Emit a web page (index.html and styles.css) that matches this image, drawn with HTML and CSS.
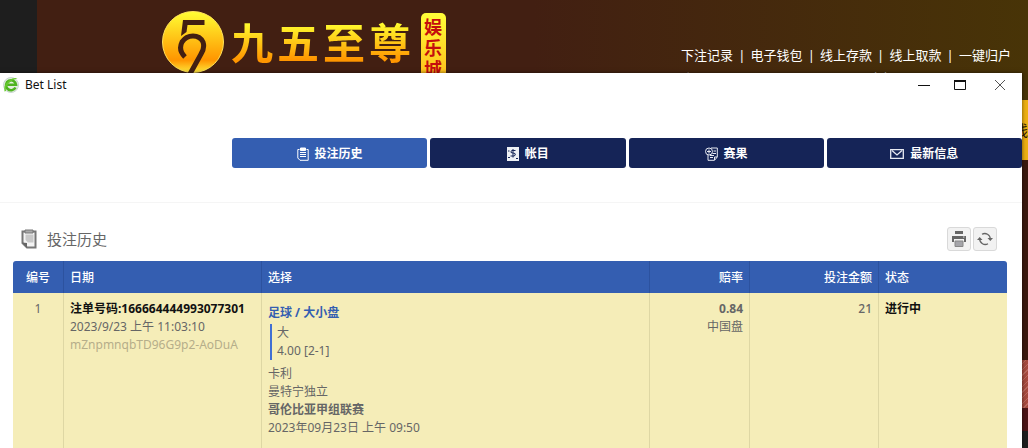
FILE: index.html
```html
<!DOCTYPE html>
<html lang="zh-CN">
<head>
  <meta charset="utf-8">
  <title>Bet List</title>
  <link rel="stylesheet" href="styles.css">
</head>
<body>
<div class="desktop">

<!-- Site behind the window -->
<div class="site">
  <header class="site-header">
    <a href="#" class="logo">
      <svg class="logo-mark" width="64" height="64" viewBox="0 0 64 64" aria-hidden="true">
        <defs>
          <linearGradient id="gold" x1="0" y1="0" x2="0" y2="1">
            <stop offset="0" stop-color="#ffff34"/>
            <stop offset="0.35" stop-color="#ffcf1c"/>
            <stop offset="0.8" stop-color="#ff9500"/>
            <stop offset="1" stop-color="#ffe93c"/>
          </linearGradient>
        </defs>
        <circle cx="32" cy="32" r="30.5" fill="url(#gold)" stroke="#ffe25a"/>
        <path d="M22 10H43.500V15H26.500L25.500 22L20 26Z" fill="#421f12"/>
        <path d="M24 47Q17 40 21 32Q25 26 32 26Q39 26 42 32Q44 38 40 44L29 64" fill="none" stroke="#421f12" stroke-width="5"/>
      </svg>
      <span class="logo-name">九五至尊</span>
      <span class="logo-tag">娱乐城</span>
    </a>
    <div class="account">
      <nav class="site-nav">
        <a href="#">下注记录</a><span>|</span><a href="#">电子钱包</a><span>|</span><a href="#">线上存款</a><span>|</span><a href="#">线上取款</a><span>|</span><a href="#">一键归户</a>
      </nav>
      <div class="account-info"><span>账号</span><span>余额</span></div>
    </div>
  </header>
  <div class="site-menu">线</div>
  <div class="site-banner"></div>
  <div class="site-stripes"></div>
  <div class="site-notice"></div>
</div>

<!-- Bet list window -->
<main class="window">
  <div class="title-bar">
    <svg width="16" height="16" viewBox="0 0 16 16" aria-hidden="true">
      <circle cx="8" cy="8" r="7.500" fill="#e3eee0" stroke="#c9d5d1"/>
      <path d="M12.500 10.500A5 5 0 1 1 13 7.700H4.500" fill="none" stroke="#4fb320" stroke-width="2.600"/>
      <path d="M1.500 14.500Q0 8 6 3.500Q11 0 14.500 1.500Q9 2.500 5.500 6.500Q2 10 3 14Z" fill="#66c92d"/>
    </svg>
    <span class="title-text">Bet List</span>
    <div class="window-buttons">
      <button aria-label="Minimize"><svg width="12" height="12" viewBox="0 0 12 12"><path d="M0 6.500H12" stroke="#111"/></svg></button>
      <button aria-label="Maximize"><svg width="12" height="12" viewBox="0 0 12 12"><path d="M.5 2H11.500V10.500H.5Z" fill="none" stroke="#111"/><path d="M0 2H12" stroke="#111" stroke-width="2"/></svg></button>
      <button class="close" aria-label="Close"><svg width="12" height="12" viewBox="0 0 12 12"><path d="M1 1L11 11M11 1L1 11" stroke="#555"/></svg></button>
    </div>
  </div>

  <nav class="tabs">
    <a href="#" class="tab active">
      <svg width="12" height="14" viewBox="0 0 12 14" fill="none" stroke="#fff"><path d="M2.500 2.500H.8V11L3 13.300H11.200V2.500H9.500"/><path d="M3.500 1H8.500V3.500H3.500Z" fill="#fff"/><path d="M3 5.500H9M3 7.500H9M3 9.500H9" stroke-width="1.200"/></svg>
      投注历史
    </a>
    <a href="#" class="tab">
      <svg width="12" height="14" viewBox="0 0 12 14"><rect width="12" height="14" fill="#edf0f5"/><path d="M8.500 3.500H5Q3.500 4 4 5.500L8 6.500Q9 8.500 7 9H3.500M6 2V10.500M1 4H2.500M1 10.500H3M9 11.500H11" fill="none" stroke="#152457"/></svg>
      帐目
    </a>
    <a href="#" class="tab">
      <svg width="13" height="14" viewBox="0 0 13 14" fill="none" stroke="#e7eaf2"><path d="M6 1H12.300V10L9.500 13.300H3V8"/><path d="M9.500 13V10H12"/><circle cx="4" cy="4.500" r="3.500"/><path d="M4 2.500V6.500M2 4.500H6M8.500 4H11M7.500 6.500H11M5 8.500H9M5 10.500H8"/></svg>
      赛果
    </a>
    <a href="#" class="tab">
      <svg width="14" height="10" viewBox="0 0 14 10" fill="none" stroke="#e7eaf2" stroke-width="1.300"><path d="M.7 .7H13.300V9.300H.7Z"/><path d="M2 1.500L7 6L12 1.500"/></svg>
      最新信息
    </a>
  </nav>

  <section class="history">
    <div class="history-head">
      <svg width="16" height="20" viewBox="0 0 16 20" aria-hidden="true">
        <path d="M1.500 2.500H14.500V18.500H6L1.500 14Z" fill="#f4f4f4" stroke="#777" stroke-width="2"/>
        <path d="M4.500 5.500H12.500V13.500H7L4.500 11Z" fill="#c9c9c9"/>
        <path d="M1 13.500L6 14V19Z" fill="#666"/>
        <path d="M4 1H12V4H4Z" fill="#aaa" stroke="#777"/>
      </svg>
      <h1>投注历史</h1>
      <div class="tools">
        <button aria-label="打印">
          <svg width="14" height="16" viewBox="0 0 14 16"><path d="M3 0H11V3H3ZM0 5H14V11H12V8H2V11H0Z" fill="#666"/><path d="M3 10H11V15.500H3Z" fill="#a5a5aa" stroke="#888"/><path d="M11 6H12.500" stroke="#ddd"/></svg>
        </button>
        <button aria-label="刷新">
          <svg width="16" height="14" viewBox="0 0 16 14" fill="none" stroke="#666" stroke-width="1.300"><path d="M5 2.300A5.500 5.500 0 0 1 13.300 7M11 11.700A5.500 5.500 0 0 1 2.700 7"/><path d="M10.500 6H16L13.300 9ZM0 8H5.500L2.700 5Z" fill="#666" stroke="none"/></svg>
        </button>
      </div>
    </div>

    <table class="bets">
      <thead>
        <tr>
          <th class="col-no">编号</th>
          <th class="col-date">日期</th>
          <th class="col-pick">选择</th>
          <th class="col-odds">赔率</th>
          <th class="col-stake">投注金额</th>
          <th class="col-status">状态</th>
        </tr>
      </thead>
      <tbody>
        <tr>
          <td class="col-no">1</td>
          <td class="col-date">
            <div class="strong">注单号码:166664444993077301</div>
            <div>2023/9/23 上午 11:03:10</div>
            <div class="token">mZnpmnqbTD96G9p2-AoDuA</div>
          </td>
          <td class="col-pick">
            <div class="sport">足球 / 大小盘</div>
            <div class="selection">
              <div>大</div>
              <div>4.00 [2-1]</div>
            </div>
            <div>卡利</div>
            <div>曼特宁独立</div>
            <div class="league">哥伦比亚甲组联赛</div>
            <div>2023年09月23日 上午 09:50</div>
          </td>
          <td class="col-odds">
            <div class="odds">0.84</div>
            <div>中国盘</div>
          </td>
          <td class="col-stake"><span class="stake">21</span></td>
          <td class="col-status strong">进行中</td>
        </tr>
      </tbody>
    </table>
  </section>
</main>

</div>
</body>
</html>
```

FILE: styles.css
```css
/* General */
* {
    box-sizing: border-box;
}

body {
    margin: 0;
    font-family: "Noto Sans", "Noto Sans CJK SC", sans-serif;
    font-size: 12px;
    line-height: 18px;
    color: #666;
    background: #1e1e1e;
}

a {
    color: inherit;
    text-decoration: none;
}

button {
    padding: 0;
    border: 0;
    background: none;
}

svg {
    display: block;
    flex: none;
}

.desktop {
    position: relative;
    display: flex;
    min-height: 100vh;
    overflow: hidden;
}

/* Site */
.site {
    flex: 1;
    margin-left: 37px;
}

.site-header {
    display: flex;
    justify-content: space-between;
    height: 100px;
    padding: 0 17px 0 124px;
    background: linear-gradient(90deg, #421f12 50%, #483407);
    overflow: hidden;
}

.logo {
    display: flex;
    align-items: flex-start;
    padding-top: 10px;
}

.logo-name {
    margin-left: 6px;
    font-family: "Noto Sans CJK SC", sans-serif;
    font-size: 42px;
    font-weight: bold;
    line-height: 62px;
    letter-spacing: 4px;
    color: transparent;
    background: linear-gradient(#ffff30 20%, #ff9600 80%);
    -webkit-background-clip: text;
    background-clip: text;
}

.logo-tag {
    width: 25px;
    margin: 3px 0 0 6px;
    padding: 3px;
    border-radius: 5px;
    font-family: "Noto Sans CJK SC", sans-serif;
    font-size: 18px;
    font-weight: bold;
    line-height: 21px;
    color: #c40d0d;
    background: linear-gradient(#ffff38, #ffb818);
}

.account {
    padding-top: 46px;
    font-size: 13px;
    color: #fff;
}

.site-nav {
    display: flex;
    justify-content: space-between;
    width: 330px;
}

.account-info {
    display: flex;
    gap: 162px;
    margin-top: 5px;
    color: #bbb;
}

.site-menu {
    height: 60px;
    font-size: 15px;
    line-height: 60px;
    text-align: right;
    color: #2b1606;
    background: #eeb013;
}

.site-banner {
    height: 200px;
    background: #3b190f;
}

.site-stripes {
    height: 48px;
    background: repeating-linear-gradient(135deg, #a74a3e 0 3px, #b9695d 3px 4px);
}

.site-notice {
    height: 23px;
    background: #4b1416;
}

/* Window */
.window {
    position: absolute;
    top: 73px;
    right: 6px;
    bottom: 0;
    left: 0;
    background: #fff;
    box-shadow: 0 0 4px rgba(0, 0, 0, 0.6);
}

.title-bar {
    display: flex;
    align-items: center;
    height: 24px;
    padding: 0 16px 0 3px;
}

.title-text {
    margin-left: 6px;
    color: #111;
}

.window-buttons {
    display: flex;
    gap: 24px;
    margin-left: auto;
}

.window-buttons .close {
    margin-left: 4px;
}

/* Tabs */
.tabs {
    display: flex;
    gap: 3px;
    height: 106px;
    padding: 41px 0 34px 232px;
    border-bottom: 1px solid #f5f5f5;
}

.tab {
    display: flex;
    flex: 1;
    align-items: center;
    justify-content: center;
    gap: 6px;
    padding-top: 2px;
    border-radius: 3px;
    font-weight: bold;
    color: #fff;
    background: #152457;
}

.tab.active {
    background: #345eb1;
}

/* History */
.history {
    padding: 0 15px 0 13px;
}

.history-head {
    display: flex;
    align-items: center;
    height: 58px;
    padding: 14px 10px 0 8px;
}

.history-head h1 {
    margin: 0 0 0 10px;
    font-size: 15px;
    font-weight: normal;
    color: #666;
}

.tools {
    display: flex;
    gap: 2px;
    margin-left: auto;
}

.tools button {
    display: flex;
    align-items: center;
    justify-content: center;
    width: 24px;
    height: 24px;
    border: 1px solid #d9d9d9;
    border-radius: 3px;
    background: #f2f2f2;
}

/* Bets table */
.bets {
    width: 100%;
    table-layout: fixed;
    border-collapse: separate;
    border-spacing: 0;
}

.bets th {
    height: 32px;
    padding: 2px 6px 0;
    border-right: 1px solid #2c529f;
    font-weight: 500;
    text-align: left;
    color: #fff;
    background: #345eb1;
}

.bets th:first-child {
    border-top-left-radius: 3px;
}

.bets th:last-child {
    border-top-right-radius: 3px;
}

.bets td {
    height: 160px;
    padding: 7px 6px;
    border-right: 1px solid #ded7a4;
    vertical-align: top;
    background: #f5edb8;
}

.bets th:last-child,
.bets td:last-child {
    border-right: 0;
}

.bets .col-no {
    width: 51px;
    text-align: center;
}

.bets .col-date {
    width: 198px;
}

.bets .col-odds {
    width: 100px;
    text-align: right;
}

.bets .col-stake {
    width: 129px;
    text-align: right;
}

.bets .col-status {
    width: 128px;
}

.bets .strong {
    font-weight: bold;
    color: #111;
}

.token {
    color: #b5ae8a;
}

.sport {
    margin-top: 4px;
    font-weight: bold;
    color: #345eb1;
}

.selection {
    margin: 2px 0 5px 2px;
    padding-left: 5px;
    border-left: 2px solid #416fd3;
}

.league,
.odds {
    font-weight: bold;
}

.stake {
    font-weight: 500;
}
```
